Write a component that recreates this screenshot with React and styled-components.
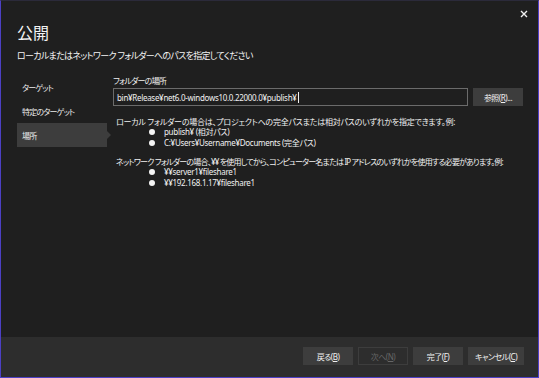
import React from "react"
import styled, { createGlobalStyle } from "styled-components"

const GlobalStyle = createGlobalStyle`
  body {
    margin: 0;
    background: #1f1f1f;
    font-family: "Noto Sans", "Noto Sans CJK JP", sans-serif;
    font-feature-settings: "palt";
  }
  * { box-sizing: border-box; }
`

const navItems = ["ターゲット", "特定のターゲット", "場所"]

const localExamples = ["publish¥ (相対パス)", "C:¥Users¥Username¥Documents (完全パス)"]
const networkExamples = ["¥¥server1¥fileshare1", "¥¥192.168.1.17¥fileshare1"]

export default function App() {
  return (
    <>
      <GlobalStyle />
      <Window>
        <CloseButton aria-label="閉じる">
          <svg width="8" height="8" viewBox="0 0 8 8">
            <path d="M1 1L7 7M7 1L1 7" stroke="#f0f0f0" strokeWidth="1.4" />
          </svg>
        </CloseButton>
        <Header>
          <Title>公開</Title>
          <Subtitle>ローカルまたはネットワーク フォルダーへのパスを指定してください</Subtitle>
        </Header>
        <Body>
          <Nav>
            {navItems.map((item, i) => (
              <NavItem key={item} active={i === 2}>
                {item}
              </NavItem>
            ))}
          </Nav>
          <Content>
            <Label>フォルダーの場所</Label>
            <InputRow>
              <PathInput>
                bin¥Release¥net6.0-windows10.0.22000.0¥publish¥
                <Caret />
              </PathInput>
              <Button>
                参照(<u>R</u>)...
              </Button>
            </InputRow>
            <Para spacing="-0.25px">
              ローカル フォルダーの場合は、プロジェクトへの完全パスまたは相対パスのいずれかを指定できます。例:
            </Para>
            <Bullets>
              {localExamples.map(t => (
                <li key={t}>{t}</li>
              ))}
            </Bullets>
            <Para second spacing="-0.8px">
              ネットワーク フォルダーの場合、¥¥ を使用してから、コンピューター名または IP アドレスのいずれかを使用する必要があります。例:
            </Para>
            <Bullets>
              {networkExamples.map(t => (
                <li key={t}>{t}</li>
              ))}
            </Bullets>
          </Content>
        </Body>
        <Footer>
          <Button>
            戻る(<u>B</u>)
          </Button>
          <Button disabled>
            次へ(<u>N</u>)
          </Button>
          <Button>
            完了(<u>F</u>)
          </Button>
          <Button wide>
            キャンセル(<u>C</u>)
          </Button>
        </Footer>
      </Window>
    </>
  )
}

const Window = styled.div`
  position: relative;
  width: 539px;
  height: 378px;
  display: flex;
  flex-direction: column;
  background: #1f1f1f;
  border: 1px solid #4c40c4;
  border-top-color: #2b2a3a;
  color: #f1f1f1;
`

const CloseButton = styled.div`
  position: absolute;
  top: 9px;
  right: 10px;
  width: 8px;
  height: 8px;
  display: flex;
`

const Header = styled.div`
  padding: 22px 16px 0;
`

const Title = styled.div`
  font-size: 16px;
  line-height: 20px;
  color: #f4f4f4;
`

const Subtitle = styled.div`
  margin-top: 6px;
  font-size: 9px;
  line-height: 14px;
  letter-spacing: -0.7px;
  color: #f4f4f4;
`

const Body = styled.div`
  flex: 1;
  display: flex;
  padding: 12px 17px 0 16px;
`

const Nav = styled.div`
  width: 96px;
  flex-shrink: 0;
  display: flex;
  flex-direction: column;
`

const NavItem = styled.div`
  position: relative;
  width: 90px;
  height: 24px;
  padding-left: 5px;
  display: flex;
  align-items: center;
  font-size: 8px;
  letter-spacing: -0.8px;
  color: #ececec;
  background: ${p => (p.active ? "#3d3d3d" : "transparent")};

  &::after {
    content: "";
    display: ${p => (p.active ? "block" : "none")};
    position: absolute;
    right: -4px;
    top: 8px;
    border-left: 4px solid #3d3d3d;
    border-top: 4px solid transparent;
    border-bottom: 4px solid transparent;
  }
`

const Content = styled.div`
  flex: 1;
  display: flex;
  flex-direction: column;
  font-size: 8px;
`

const Label = styled.div`
  line-height: 12px;
  letter-spacing: -0.8px;
`

const InputRow = styled.div`
  display: flex;
  gap: 5px;
  margin-top: 1px;
`

const PathInput = styled.div`
  width: 355px;
  height: 18px;
  padding: 0 3px;
  display: flex;
  align-items: center;
  border: 1px solid #6b6b6b;
  background: #1f1f1f;
  white-space: nowrap;
  letter-spacing: -0.3px;
  color: #f1f1f1;
`

const Caret = styled.span`
  width: 1px;
  height: 11px;
  background: #f1f1f1;
  margin-left: 1px;
`

const Button = styled.div`
  width: ${p => (p.wide ? "56px" : "50px")};
  height: 18px;
  display: flex;
  align-items: center;
  justify-content: center;
  font-size: 8px;
  letter-spacing: -0.5px;
  white-space: nowrap;
  background: ${p => (p.disabled ? "#2d2d2d" : "#3d3d3d")};
  border: 1px solid #3d3d3d;
  color: ${p => (p.disabled ? "#666666" : "#f1f1f1")};

  u {
    text-underline-offset: 1px;
  }
`

const Para = styled.div`
  margin-top: ${p => (p.second ? "8px" : "10px")};
  line-height: 11px;
  padding-left: 3px;
  letter-spacing: ${p => p.spacing};
  white-space: nowrap;
`

const Bullets = styled.ul`
  list-style: none;
  margin: -1px 0 0;
  padding: 0 0 0 51px;
  line-height: 11px;
  letter-spacing: -0.3px;

  li {
    position: relative;
  }

  li::before {
    content: "";
    position: absolute;
    left: -15px;
    top: 3px;
    width: 6px;
    height: 6px;
    border-radius: 50%;
    background: #f4f4f4;
  }
`

const Footer = styled.div`
  height: 40px;
  flex-shrink: 0;
  display: flex;
  justify-content: flex-end;
  align-items: center;
  gap: 5px;
  padding: 0 14px 2px 0;
  background: #2d2d2d;
`
